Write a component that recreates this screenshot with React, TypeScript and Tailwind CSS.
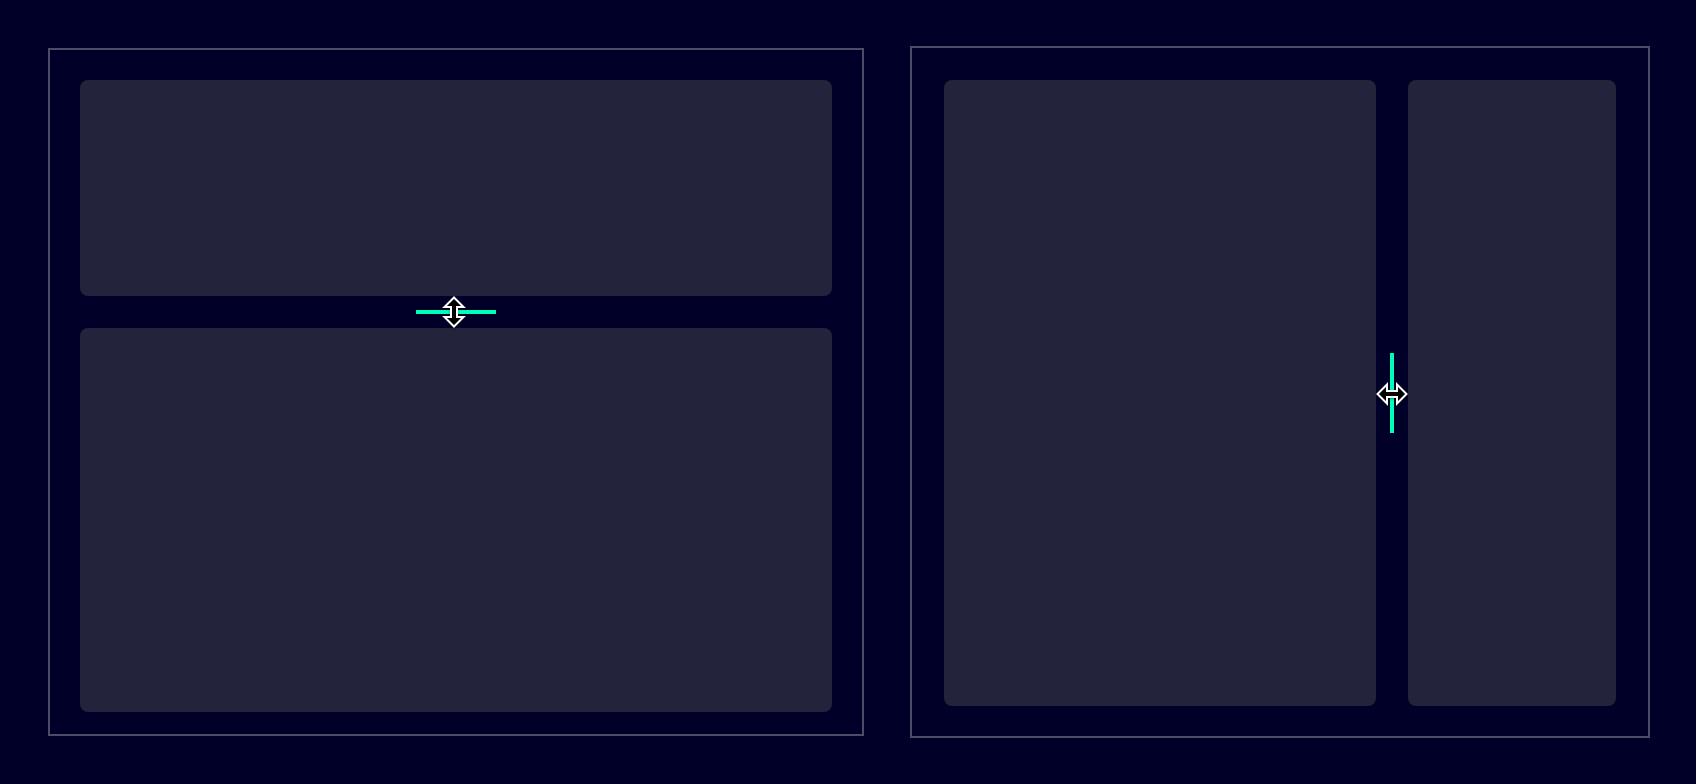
type Orientation = "rows" | "columns";

function ResizeCursor({ orientation }: { orientation: Orientation }) {
  return (
    <svg
      aria-hidden="true"
      viewBox="-18 -18 36 36"
      className={
        orientation === "rows"
          ? "absolute left-5 -top-4 size-9 drop-shadow-[0_1px_1px_rgba(0,0,0,0.4)]"
          : "absolute -left-4 top-[23px] size-9 drop-shadow-[0_1px_1px_rgba(0,0,0,0.4)]"
      }
    >
      <path
        d="M0 -14.5L9.5 -5H3V5H9.5L0 14.5L-9.5 5H-3V-5H-9.5Z"
        transform={orientation === "columns" ? "rotate(90)" : undefined}
        fill="#000"
        stroke="#fff"
        strokeWidth="2"
      />
    </svg>
  );
}

function Splitter({ orientation }: { orientation: Orientation }) {
  const rows = orientation === "rows";
  return (
    <div
      role="separator"
      aria-orientation={rows ? "horizontal" : "vertical"}
      className={
        rows
          ? "flex h-8 shrink-0 cursor-row-resize items-center justify-center"
          : "flex w-8 shrink-0 cursor-col-resize items-center justify-center"
      }
    >
      <div className={rows ? "relative h-1 w-20 bg-[#00ffb9]" : "relative h-20 w-1 bg-[#00ffb9]"}>
        <ResizeCursor orientation={orientation} />
      </div>
    </div>
  );
}

export default function App() {
  return (
    <main className="grid min-h-screen grid-cols-[816fr_740fr] gap-[46px] bg-[#000028] py-[46px] pr-[46px] pl-12">
      <section className="my-0.5 flex flex-col border-2 border-[#4c4c68] px-[30px] pt-[30px] pb-[22px]">
        <div className="flex-[9_1_0%] rounded-lg bg-[#23233c]" />
        <Splitter orientation="rows" />
        <div className="flex-[16_1_0%] rounded-lg bg-[#23233c]" />
      </section>
      <section className="flex border-2 border-[#4c4c68] px-8 pt-8 pb-[30px]">
        <div className="flex-[27_1_0%] rounded-lg bg-[#23233c]" />
        <Splitter orientation="columns" />
        <div className="flex-[13_1_0%] rounded-lg bg-[#23233c]" />
      </section>
    </main>
  );
}
